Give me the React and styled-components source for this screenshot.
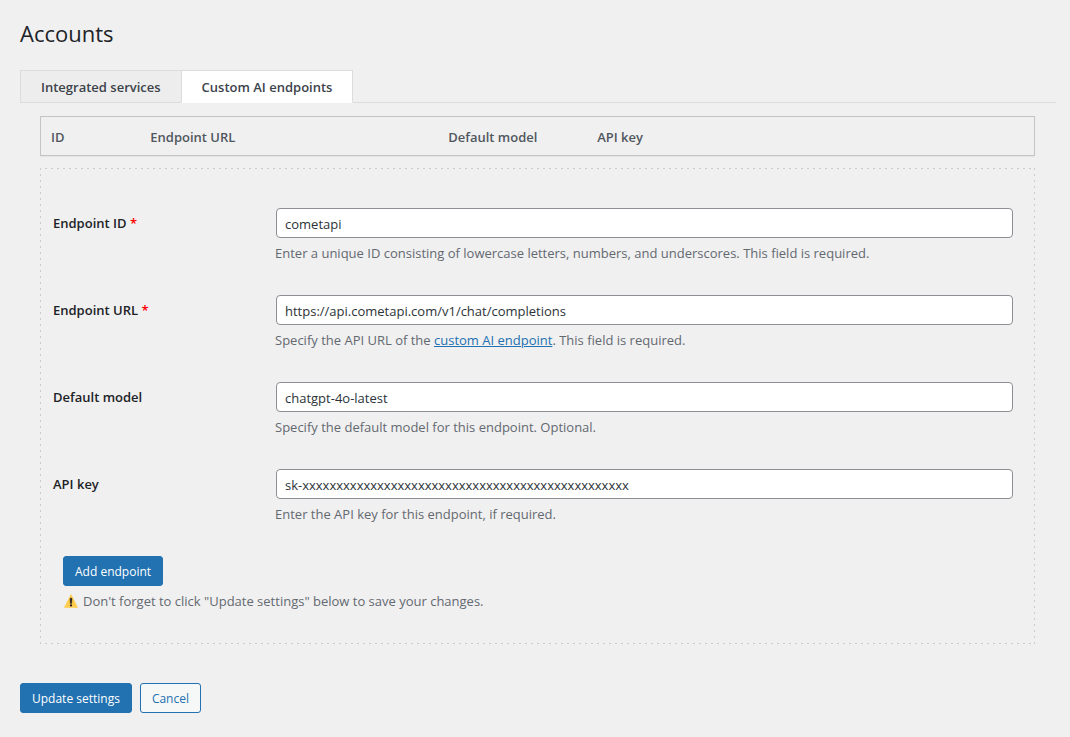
import React, { useState } from "react";
import styled, { createGlobalStyle } from "styled-components";

const GlobalStyle = createGlobalStyle`
    *, *::before, *::after {
        box-sizing: border-box;
    }

    body {
        margin: 0;
        background: #f0f0f0;
        color: #1d2327;
        font-family: "Segoe UI", "Open Sans", "Noto Sans", sans-serif;
        font-size: 13px;
        line-height: 20px;
    }
`;

const Page = styled.main`
    padding: 15px 14px 24px 20px;
`;

const Title = styled.h1`
    margin: 0 0 19px;
    font-size: 22px;
    font-weight: 400;
    line-height: 36px;
`;

const Tabs = styled.nav`
    display: flex;
    border-bottom: 1px solid #dcdcde;
`;

const Tab = styled.a`
    margin: 0 -1px -1px 0;
    padding: 6px 20px 5px;
    border: 1px solid #dcdcde;
    border-bottom-color: ${({ $active }) => ($active ? "#fff" : "#dcdcde")};
    background: ${({ $active }) => ($active ? "#fff" : "#ededed")};
    color: #3c434a;
    font-weight: 600;
    text-decoration: none;
`;

const TabPanel = styled.section`
    padding: 13px 21px 0 20px;
`;

const EndpointTable = styled.table`
    width: 100%;
    table-layout: fixed;
    border: 1px solid #c3c4c7;
    border-spacing: 0;
    box-shadow: 0 1px 1px rgba(0, 0, 0, 0.04);
`;

const HeadCell = styled.th`
    width: ${({ $width }) => $width || "auto"};
    padding: 10px 10px 8px;
    color: #50575e;
    font-weight: 600;
    text-align: left;
`;

/* Short dashes with wide gaps, which a plain dashed border can't give */
const dashX = "linear-gradient(90deg, #ccc 2px, transparent 2px)";
const dashY = "linear-gradient(180deg, #ccc 2px, transparent 2px)";

const EndpointForm = styled.div`
    margin-top: 12px;
    padding: 25px 13px 32px;
    background:
        ${dashX} 5px 0 / 6px 1px repeat-x,
        ${dashX} 5px 100% / 6px 1px repeat-x,
        ${dashY} 0 0 / 1px 6px repeat-y,
        ${dashY} 100% 0 / 1px 6px repeat-y;
`;

const FormRow = styled.div`
    display: grid;
    grid-template-columns: 222px minmax(0, 1fr);
    padding: 15px 10px 16px 0;
`;

const Label = styled.label`
    padding-top: 5px;
    font-weight: 600;
`;

const Required = styled.span`
    color: #f00;
`;

const Input = styled.input`
    display: block;
    width: 100%;
    height: 30px;
    margin: 0 1px;
    padding: 2px 8px 0;
    border: 1px solid #8c8f94;
    border-radius: 4px;
    background: #fff;
    color: #2c3338;
    font: inherit;
`;

const Description = styled.p`
    margin: 0;
    padding-top: 4px;
    color: #646970;
    line-height: 22px;
`;

const Link = styled.a`
    color: #2271b1;
`;

const Actions = styled.div`
    padding: 15px 10px 0;
`;

const ButtonRow = styled.div`
    display: flex;
    gap: 8px;
    padding-top: 39px;
`;

const Button = styled.button`
    height: 30px;
    padding: 2px 11px 0;
    border: 1px solid #2271b1;
    border-radius: 3px;
    background: ${({ $primary }) => ($primary ? "#2271b1" : "#f6f7f7")};
    color: ${({ $primary }) => ($primary ? "#fff" : "#2271b1")};
    font: inherit;
    font-size: 12px;
    cursor: pointer;
`;

const Icon = styled.svg`
    width: 14px;
    height: 14px;
    margin: 0 5px 0 1px;
    vertical-align: -2px;
`;

const WarningIcon = () => (
    <Icon viewBox="0 0 14 14" role="img" aria-label="Warning">
        <path d="M7 0.6 L13.6 13.4 H0.4 Z" fill="#ffcc4d" stroke="#ffcc4d" strokeWidth="0.6" strokeLinejoin="round" />
        <path d="M6 4.2 h2 l-0.3 5.2 h-1.4 z" fill="#231f20" stroke="#231f20" strokeWidth="0.4" />
        <circle cx="7" cy="11.4" r="1.1" fill="#231f20" />
    </Icon>
);

const fields = [
    {
        id: "endpoint_id",
        label: "Endpoint ID",
        required: true,
        value: "cometapi",
        description:
            "Enter a unique ID consisting of lowercase letters, numbers, and underscores. This field is required.",
    },
    {
        id: "endpoint_url",
        label: "Endpoint URL",
        required: true,
        value: "https://api.cometapi.com/v1/chat/completions",
        description: (
            <>
                Specify the API URL of the <Link href="#custom">custom AI endpoint</Link>. This field is required.
            </>
        ),
    },
    {
        id: "default_model",
        label: "Default model",
        value: "chatgpt-4o-latest",
        description: "Specify the default model for this endpoint. Optional.",
    },
    {
        id: "api_key",
        label: "API key",
        value: "sk-" + "x".repeat(48),
        description: "Enter the API key for this endpoint, if required.",
    },
];

/**
 * One labelled text box of the endpoint form, with its help text below.
 */
const Field = ({ id, label, required, value, description }) => {
    const [text, setText] = useState(value);

    return (
        <FormRow>
            <Label htmlFor={id}>
                {label} {required && <Required>*</Required>}
            </Label>
            <div>
                <Input
                    id={id}
                    type="text"
                    value={text}
                    spellCheck={false}
                    aria-describedby={`${id}_description`}
                    onChange={(e) => setText(e.target.value)}
                />
                <Description id={`${id}_description`}>{description}</Description>
            </div>
        </FormRow>
    );
};

/**
 * Accounts settings page, opened on the custom AI endpoints tab.
 */
const App = () => {
    return (
        <Page>
            <GlobalStyle />
            <Title>Accounts</Title>
            <Tabs>
                <Tab href="#integrated">Integrated services</Tab>
                <Tab href="#custom" $active aria-current="page">Custom AI endpoints</Tab>
            </Tabs>
            <TabPanel>
                <EndpointTable>
                    <thead>
                        <tr>
                            <HeadCell $width="10%">ID</HeadCell>
                            <HeadCell $width="30%">Endpoint URL</HeadCell>
                            <HeadCell $width="15%">Default model</HeadCell>
                            <HeadCell>API key</HeadCell>
                        </tr>
                    </thead>
                </EndpointTable>
                <EndpointForm>
                    {fields.map((field) => (
                        <Field key={field.id} {...field} />
                    ))}
                    <Actions>
                        <Button type="button" $primary>Add endpoint</Button>
                        <Description>
                            <WarningIcon />
                            Don't forget to click "Update settings" below to save your changes.
                        </Description>
                    </Actions>
                </EndpointForm>
            </TabPanel>
            <ButtonRow>
                <Button type="submit" $primary>Update settings</Button>
                <Button type="button">Cancel</Button>
            </ButtonRow>
        </Page>
    );
};
export default App;
